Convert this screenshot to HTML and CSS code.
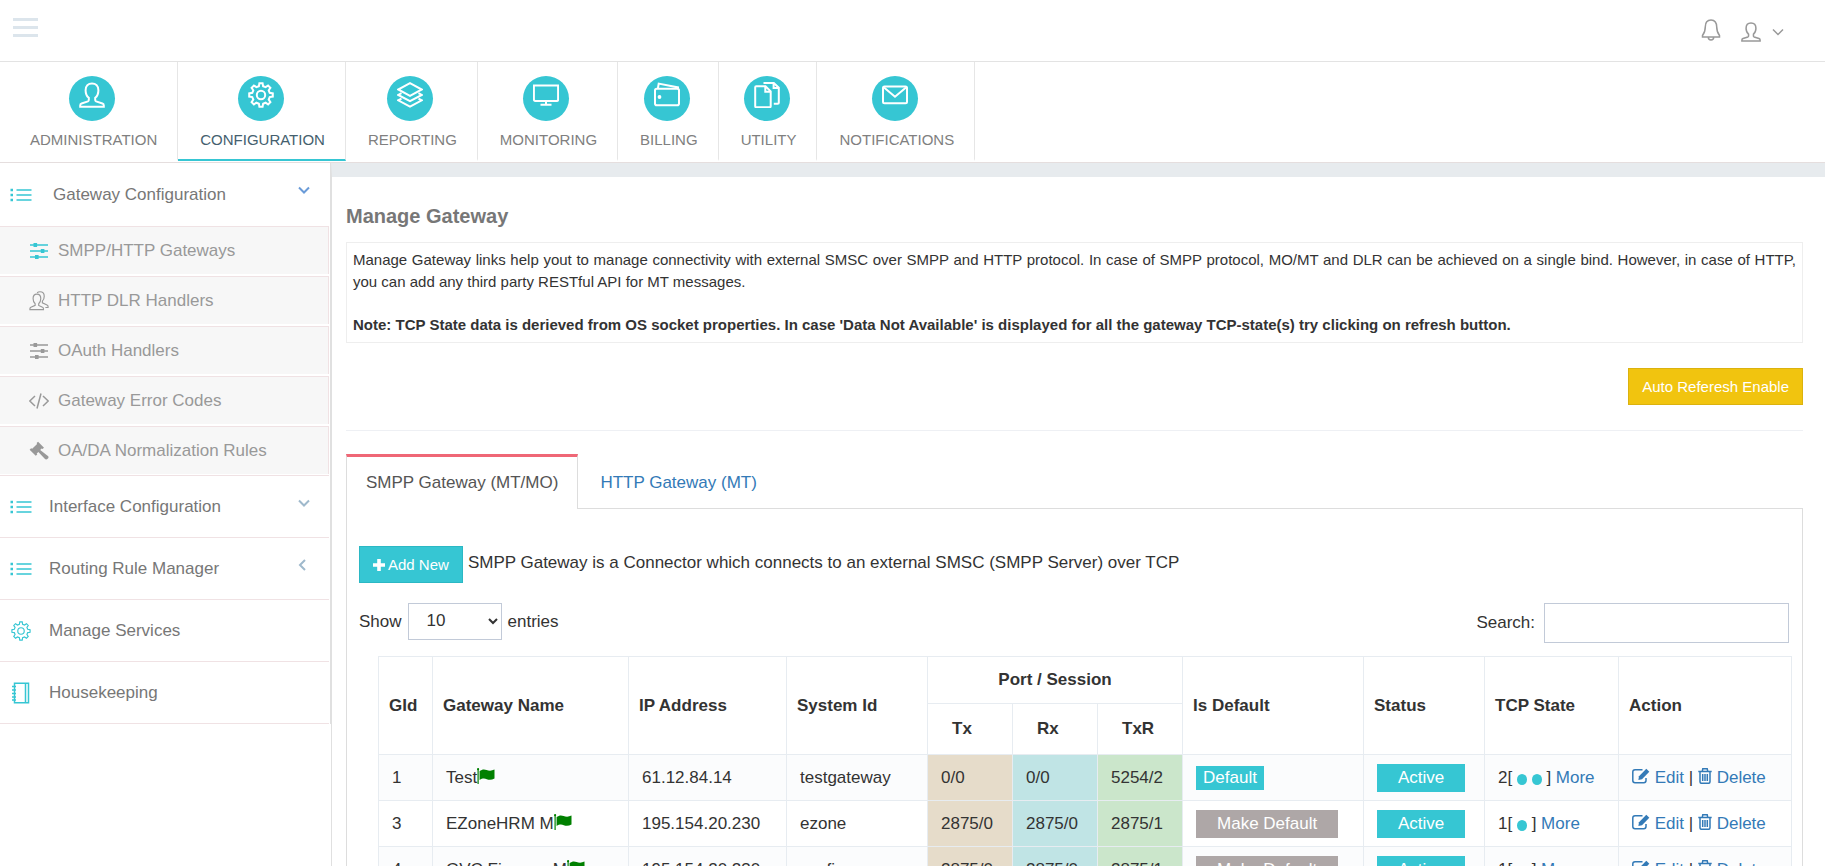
FILE: index.html
```html
<!DOCTYPE html>
<html lang="en">
<head>
<meta charset="utf-8">
<title>Manage Gateway</title>
<link rel="stylesheet" href="styles.css">
</head>
<body>
<svg class="sprite" aria-hidden="true">
  <symbol id="i-user" viewBox="0 0 26 26"><path d="M9.8 15.8C7.6 14.2 6.6 11.6 6.6 8.2 6.6 4 9.2 1.4 13 1.4s6.4 2.6 6.4 6.8c0 3.4-1 6-3.2 7.6v2.3c0 .6.3 1 .9 1.3l6.300 2.100c.9.3 1.400 1 1.400 1.900v1.400H1.200v-1.400c0-.9.5-1.600 1.400-1.900l6.300-2.100c.6-.3.9-.7.9-1.300z"/></symbol>
  <symbol id="i-users" viewBox="0 0 26 26"><path d="M8 16.500C6.200 15 5.300 12.800 5.300 9.800c0-3.600 2-5.800 5-5.800s5 2.200 5 5.800c0 3-.9 5.200-2.700 6.700v2.300l5 2.400c.9.400 1.200.9 1.200 1.800v1.300H1.200V23c0-.9.5-1.500 1.300-1.900l5.500-2.400zM10.500 2.200C11.600 1.400 12.900 1 14.300 1c3.300 0 5.500 2.300 5.500 5.700 0 2.900-.9 5-2.400 6.400v2.300l6 2.700c.9.400 1.400 1 1.400 1.900v1.500h-3.500"/></symbol>
  <symbol id="i-gear" viewBox="0 0 26 26"><circle cx="13" cy="13" r="4.200"/><path d="M10.900 4.200 11.400 1.200h3.200l.5 3 2.500 1 2.500-1.700 2.300 2.300-1.700 2.500 1 2.500 3.100.6v3.200l-3.100.5-1 2.500 1.700 2.500-2.300 2.300-2.500-1.700-2.500 1-.5 3.100h-3.200l-.5-3.100-2.500-1-2.500 1.700-2.300-2.300 1.700-2.500-1-2.500-3.100-.5v-3.200l3.100-.6 1-2.500L3.600 5.800l2.300-2.300 2.500 1.700z"/></symbol>
  <symbol id="i-layers" viewBox="0 0 26 26"><path d="M13 1.200 24.800 7.500 13 13.800 1.200 7.500zM4.500 11.200l-3.300 1.700L13 19.200l11.800-6.300-3.300-1.700M4.500 16.600l-3.300 1.700L13 24.600l11.800-6.300-3.300-1.700"/></symbol>
  <symbol id="i-screen" viewBox="0 0 26 26"><path d="M.9 3.500h24.200v14c0 .9-.5 1.400-1.400 1.400H2.300c-.9 0-1.400-.5-1.400-1.400zM13 19v3.500M7.500 22.700h11"/></symbol>
  <symbol id="i-wallet" viewBox="0 0 26 26"><rect x="1" y="6.800" width="24" height="16.400" rx="1.800"/><path d="M3.900 6.500 4.700 1.600 24 5.400v1.400"/><circle class="solid" cx="5.500" cy="15" r="1.900"/></symbol>
  <symbol id="i-docs" viewBox="0 0 26 26"><path d="M2.200 4.200h9.300l5.200 5.200v14.800c0 .7-.3 1-1 1H2.200c-.7 0-1-.3-1-1v-19c0-.7.300-1 1-1zM11.300 4.500v5.200h5.200M9.500 1h10.300l5 4.800v15c0 .7-.3 1-1 1h-4M19.600 1.200v4.700h5"/></symbol>
  <symbol id="i-mail" viewBox="0 0 26 26"><rect x="1" y="4.500" width="24" height="16.700" rx="1.500"/><path d="m2 5.500 11 9.300 11-9.300"/></symbol>
  <symbol id="i-bell" viewBox="0 0 20 22"><path d="M10 1C6 1 4.300 4 4.300 7.800c0 4.500-.8 6.200-2.800 8.700v1.600h17v-1.600c-2-2.500-2.800-4.200-2.800-8.700C15.700 4 14 1 10 1zM7.300 18.300c0 1.700 1.100 2.700 2.700 2.700s2.700-1 2.700-2.700"/></symbol>
  <symbol id="i-list" viewBox="0 0 22 14"><path d="M6.500 2h15M6.500 7h15M6.500 12h15"/><path class="solid" d="M.5.800H3v2.400H.5zM.5 5.800H3v2.400H.5zM.5 10.800H3v2.400H.5z"/></symbol>
  <symbol id="i-equal" viewBox="0 0 20 20"><path d="M1 4h18M1 10h18M1 16h18"/><path class="solid" d="M4.500 2h3.600v4H4.500zM11.800 8h3.600v4h-3.600zM6 14h3.600v4H6z"/></symbol>
  <symbol id="i-code" viewBox="0 0 20 20"><path d="M6 5 .8 10 6 15M14 5l5.200 5-5.200 5M12 2.500 8 17.500"/></symbol>
  <symbol id="i-gavel" viewBox="0 0 22 22"><path class="solid" d="M10 .8 16.500 7.300 14.800 8.700 13.900 8.200 12.300 10l8.500 6.400c1 .8.900 1.800 0 2.900-1.100 1.200-2.300 1.500-3.200.6L10.300 12 8.500 13.800l.6 1L7.400 16.300.7 9.600 2.300 8l1.200.5L8.900 3.200l-.5-1z"/></symbol>
  <symbol id="i-book" viewBox="0 0 20 22"><path d="M3.500 1.200h14v19.600h-14zM14.500 1.200v19.600M1 4.500h4M1 8h4M1 11.500h4M1 15h4M1 18h4"/></symbol>
  <symbol id="i-down" viewBox="0 0 12 12"><path d="m1 3.500 5 5 5-5"/></symbol>
  <symbol id="i-left" viewBox="0 0 12 12"><path d="M7 1 2 6l5 5"/></symbol>
  <symbol id="i-plus" viewBox="0 0 12 12"><path class="solid" d="M4.200 0h3.600v4.200H12v3.600H7.800V12H4.200V7.800H0V4.200h4.200z"/></symbol>
  <symbol id="i-flag" viewBox="0 0 18 16"><path class="solid" d="M.5 1h1.200v15H.5zM2.600 3C5 1.200 7.300 1 9.600 2c2.300 1 5 1.100 7.900-.4v9c-2.800 1.500-5.400 1.500-7.700.6-2.300-1-4.700-.9-7.200.9z"/><circle class="solid" cx="1.100" cy="1.200" r="1.100"/></symbol>
  <symbol id="i-edit" viewBox="0 0 18 16"><path d="M14 10v2.500c0 1.400-.8 2.200-2.200 2.200H3C1.600 14.700.8 13.900.8 12.500V4c0-1.400.8-2.200 2.200-2.200h7.500"/><path class="solid" d="m14.300.8 3 3L10 11.200l-3.600.7.600-3.700z"/></symbol>
  <symbol id="i-trash" viewBox="0 0 14 16"><path d="M.3 3.400h13.400M4.300 3.200l.5-2.400h4.400l.5 2.400M2 3.600v10.200c0 1 .6 1.500 1.400 1.500h7.200c.8 0 1.400-.5 1.400-1.500V3.600M4.700 6v7M7 6v7M9.300 6v7"/></symbol>
</svg>

<header class="topbar">
  <button class="burger" type="button" aria-label="Toggle menu"><span></span><span></span><span></span></button>
  <div class="topbar-right">
    <button class="plain bell" type="button" aria-label="Alerts"><svg width="20" height="22"><use href="#i-bell"/></svg></button>
    <button class="plain account" type="button" aria-label="Account"><svg width="20" height="20"><use href="#i-user"/></svg><svg class="caret" width="12" height="12"><use href="#i-down"/></svg></button>
  </div>
</header>

<nav class="mainnav">
  <a href="#"><span class="disc"><svg width="26" height="26"><use href="#i-user"/></svg></span><span class="name">ADMINISTRATION</span></a>
  <a href="#" class="current"><span class="disc"><svg width="26" height="26"><use href="#i-gear"/></svg></span><span class="name">CONFIGURATION</span></a>
  <a href="#"><span class="disc"><svg width="26" height="26"><use href="#i-layers"/></svg></span><span class="name">REPORTING</span></a>
  <a href="#"><span class="disc"><svg width="26" height="26"><use href="#i-screen"/></svg></span><span class="name">MONITORING</span></a>
  <a href="#"><span class="disc"><svg width="26" height="26"><use href="#i-wallet"/></svg></span><span class="name">BILLING</span></a>
  <a href="#"><span class="disc"><svg width="26" height="26"><use href="#i-docs"/></svg></span><span class="name">UTILITY</span></a>
  <a href="#"><span class="disc"><svg width="26" height="26"><use href="#i-mail"/></svg></span><span class="name">NOTIFICATIONS</span></a>
</nav>

<div class="shell">
  <aside class="side">
    <a class="group open" href="#"><svg width="22" height="14"><use href="#i-list"/></svg><span>Gateway Configuration</span><svg class="arrow" width="12" height="12"><use href="#i-down"/></svg></a>
    <div class="sub">
      <a class="on" href="#"><svg width="20" height="20"><use href="#i-equal"/></svg>SMPP/HTTP Gateways</a>
      <a href="#"><svg width="20" height="20"><use href="#i-users"/></svg>HTTP DLR Handlers</a>
      <a href="#"><svg width="20" height="20"><use href="#i-equal"/></svg>OAuth Handlers</a>
      <a href="#"><svg width="20" height="20"><use href="#i-code"/></svg>Gateway Error Codes</a>
      <a href="#"><svg width="20" height="20"><use href="#i-gavel"/></svg>OA/DA Normalization Rules</a>
    </div>
    <a class="group" href="#"><svg width="22" height="14"><use href="#i-list"/></svg><span>Interface Configuration</span><svg class="arrow" width="12" height="12"><use href="#i-down"/></svg></a>
    <a class="group" href="#"><svg width="22" height="14"><use href="#i-list"/></svg><span>Routing Rule Manager</span><svg class="arrow" width="12" height="12"><use href="#i-left"/></svg></a>
    <a class="group" href="#"><svg width="22" height="20"><use href="#i-gear"/></svg><span>Manage Services</span></a>
    <a class="group" href="#"><svg width="22" height="22"><use href="#i-book"/></svg><span>Housekeeping</span></a>
  </aside>

  <main class="main">
    <div class="page">
      <h1>Manage Gateway</h1>
      <div class="info">
        <p>Manage Gateway links help yout to manage connectivity with external SMSC over SMPP and HTTP protocol. In case of SMPP protocol, MO/MT and DLR can be achieved on a single bind. However, in case of HTTP, you can add any third party RESTful API for MT messages.</p>
        <p><b>Note: TCP State data is derieved from OS socket properties. In case 'Data Not Available' is displayed for all the gateway TCP-state(s) try clicking on refresh button.</b></p>
      </div>
      <div class="refresh"><button class="btn gold" type="button">Auto Referesh Enable</button></div>
      <hr>
      <div class="tabs">
        <a class="tab active" href="#">SMPP Gateway (MT/MO)</a>
        <a class="tab" href="#">HTTP Gateway (MT)</a>
      </div>
      <section class="panel">
        <div class="intro"><button class="btn teal" type="button"><svg width="12" height="12"><use href="#i-plus"/></svg>Add New</button><span>SMPP Gateway is a Connector which connects to an external SMSC (SMPP Server) over TCP</span></div>
        <div class="controls">
          <label class="length">Show <select><option>10</option><option>25</option><option>50</option></select> entries</label>
          <label class="search">Search: <input type="search"></label>
        </div>
        <div class="tablewrap">
          <table>
            <colgroup><col class="c-id"><col class="c-name"><col class="c-ip"><col class="c-sys"><col class="c-port"><col class="c-port"><col class="c-port"><col class="c-def"><col class="c-stat"><col class="c-tcp"><col class="c-act"></colgroup>
            <thead>
              <tr><th rowspan="2">GId</th><th rowspan="2">Gateway Name</th><th rowspan="2">IP Address</th><th rowspan="2">System Id</th><th colspan="3" class="mid">Port / Session</th><th rowspan="2">Is Default</th><th rowspan="2">Status</th><th rowspan="2">TCP State</th><th rowspan="2">Action</th></tr>
              <tr class="ports"><th>Tx</th><th>Rx</th><th>TxR</th></tr>
            </thead>
            <tbody>
              <tr><td>1</td><td>Test<svg class="flag" width="18" height="16"><use href="#i-flag"/></svg></td><td>61.12.84.14</td><td>testgateway</td><td class="tx">0/0</td><td class="rx">0/0</td><td class="txr">5254/2</td><td><span class="label">Default</span></td><td><button class="pill" type="button">Active</button></td><td>2[ <i class="dot"></i> <i class="dot"></i> ] <a href="#">More</a></td><td><a href="#"><svg width="18" height="16"><use href="#i-edit"/></svg> Edit</a> | <a href="#"><svg width="14" height="16"><use href="#i-trash"/></svg> Delete</a></td></tr>
              <tr><td>3</td><td>EZoneHRM M<svg class="flag" width="18" height="16"><use href="#i-flag"/></svg></td><td>195.154.20.230</td><td>ezone</td><td class="tx">2875/0</td><td class="rx">2875/0</td><td class="txr">2875/1</td><td><button class="pill grey" type="button">Make Default</button></td><td><button class="pill" type="button">Active</button></td><td>1[ <i class="dot"></i> ] <a href="#">More</a></td><td><a href="#"><svg width="18" height="16"><use href="#i-edit"/></svg> Edit</a> | <a href="#"><svg width="14" height="16"><use href="#i-trash"/></svg> Delete</a></td></tr>
              <tr><td>4</td><td>GVC Finance M<svg class="flag" width="18" height="16"><use href="#i-flag"/></svg></td><td>195.154.20.230</td><td>gvcfin</td><td class="tx">2875/0</td><td class="rx">2875/0</td><td class="txr">2875/1</td><td><button class="pill grey" type="button">Make Default</button></td><td><button class="pill" type="button">Active</button></td><td>1[ <i class="dot"></i> ] <a href="#">More</a></td><td><a href="#"><svg width="18" height="16"><use href="#i-edit"/></svg> Edit</a> | <a href="#"><svg width="14" height="16"><use href="#i-trash"/></svg> Delete</a></td></tr>
            </tbody>
          </table>
        </div>
      </section>
    </div>
  </main>
</div>
</body>
</html>
```
FILE: styles.css
```css
* { box-sizing: border-box; }

body {
  margin: 0;
  height: 100vh;
  display: flex;
  flex-direction: column;
  overflow: hidden;
  background: #fff;
  color: #333;
  font: 17px/24px "Liberation Sans", Arial, sans-serif;
}

a { color: #337ab7; text-decoration: none; }
button, input, select { font: inherit; color: inherit; }
p { margin: 0; }

svg { fill: none; stroke: currentColor; stroke-width: 1.5; flex: none; }
.solid { fill: currentColor; stroke: none; }
.sprite { position: absolute; width: 0; height: 0; }

/* Top bar */
.topbar {
  flex: none;
  display: flex;
  justify-content: space-between;
  align-items: flex-start;
  height: 62px;
  padding: 18px 41px 0 13px;
  border-bottom: 1px solid #e3e3e3;
}
.burger {
  display: flex;
  flex-direction: column;
  gap: 5px;
  width: 25px;
  padding: 0;
  border: 0;
  background: none;
}
.burger span { height: 3px; background: #dce5ec; }
.topbar-right { display: flex; gap: 20px; color: #999; }
.plain { display: flex; align-items: center; gap: 11px; padding: 0; border: 0; background: none; }
.account { padding-top: 4px; }
.account svg { stroke-width: 2; }
.account .caret { stroke-width: 1.5; }

/* Module navigation */
.mainnav {
  flex: none;
  display: flex;
  height: 101px;
  padding: 0 0 1px 8px;
  border-bottom: 1px solid #e5dede;
}
.mainnav a {
  display: flex;
  flex-direction: column;
  align-items: center;
  gap: 8px;
  padding: 14px 20px 0 18px;
  border-right: 1px solid #e6e6e6;
  border-bottom: 2px solid transparent;
  color: #808080;
  font-size: 15px;
  line-height: 22px;
}
.mainnav .name { padding-left: 4px; }
.mainnav .current { color: #44606e; border-bottom-color: #36c6d3; }
.disc {
  display: flex;
  justify-content: center;
  width: 46px;
  height: 45px;
  padding-top: 6px;
  border-radius: 50%;
  background: #36c6d3;
  color: #fff;
}
.disc svg { stroke-width: 2; }

/* Sidebar */
.shell { flex: 1; min-height: 0; display: flex; }
.side { flex: none; align-self: flex-start; width: 331px; padding-right: 1px; border-right: 1px solid #e0e0e0; }
.group {
  display: flex;
  align-items: center;
  height: 62px;
  padding: 0 19px 0 10px;
  border-bottom: 1px solid #f0e2e4;
  color: #777;
}
.group > svg:first-child { color: #36c6d3; }
.group span { flex: 1; padding-left: 17px; }
.group.open { height: 64px; }
.group.open span { padding-left: 21px; }
.group .arrow { align-self: flex-start; margin-top: 21px; color: #9fb9cc; stroke-width: 2; }
.group.open .arrow { color: #6a9bd8; }
.sub { border-bottom: 1px solid #f0e2e4; }
.sub a {
  display: flex;
  align-items: center;
  gap: 9px;
  height: 48px;
  margin-bottom: 2px;
  padding-left: 29px;
  border: solid #f0e2e4;
  border-width: 1px 1px 0 0;
  background: #f7f7f7;
  color: #999;
}
.sub a:first-child { border-top: 0; height: 47px; }
.sub a:last-child { margin-bottom: 1px; }
.sub .on svg { color: #36c6d3; }

/* Page */
.main { flex: 1; min-width: 0; border-top: 14px solid #e7ebee; border-left: 1px solid #e0e0e0; }
.page { padding: 26px 22px 0 14px; }
h1 { margin: 0 0 13px; color: #777; font-size: 20px; line-height: 26px; }
.info {
  padding: 6px;
  border: 1px solid #eee;
  font-size: 15px;
  line-height: 22px;
  text-align: justify;
}
.info p + p { padding-top: 21px; }
.refresh { display: flex; justify-content: flex-end; padding: 25px 0; }
.btn { padding: 7px 13px; border: 1px solid; color: #fff; font-size: 15px; line-height: 21px; }
.gold { background: #f1c40f; border-color: #dbb20e; }
.teal { display: flex; align-items: center; gap: 3px; background: #36c6d3; border-color: #2bb8c4; }
hr { margin: 0 0 23px; border: 0; border-top: 1px solid #eef0f4; }

.tabs { display: flex; gap: 2px; border-bottom: 1px solid #ddd; }
.tab { padding: 16px 20px 13px; border-top: 1px solid transparent; }
.tab.active {
  margin-bottom: -1px;
  padding: 14px 19px;
  border: 1px solid #ddd;
  border-width: 3px 1px 0;
  border-top-color: #ef6776;
  background: #fff;
  color: #555;
}
.panel { border: 1px solid #ddd; border-top: 0; padding: 37px 11px 0 12px; }
.intro { display: flex; align-items: flex-start; gap: 5px; }
.intro span { padding-top: 5px; }
.controls { display: flex; justify-content: space-between; padding: 20px 2px 13px 0; }
.length, .search { display: flex; align-items: flex-start; gap: 6px; line-height: 37px; }
.search { gap: 9px; line-height: 39px; }
select { width: 94px; height: 37px; padding: 0 7px 2px 14px; border: 1px solid #c2cad8; background: #fff; }
input { width: 245px; height: 40px; border: 1px solid #c2cad8; background: #fff; }

/* Gateway table */
.tablewrap { padding-left: 19px; }
table { width: 100%; table-layout: fixed; border-collapse: collapse; }
th, td { border: 1px solid #e7ecf1; text-align: left; white-space: nowrap; }
th { padding: 10px; height: 47px; }
.mid { text-align: center; }
.ports th { height: 51px; text-align: left; padding: 10px 24px; }
td { height: 46px; padding: 0 0 0 13px; line-height: 24px; }
tbody tr:nth-child(odd) { background: #fbfcfd; }
.tx { background: #e6dcca; }
.rx { background: #c0e4e5; }
.txr { background: #cbe6cb; }
.c-id { width: 54px; }
.c-name { width: 196px; }
.c-ip { width: 158px; }
.c-sys { width: 141px; }
.c-port { width: 85px; }
.c-def { width: 181px; }
.c-stat { width: 121px; }
.c-tcp { width: 134px; }
.c-act { width: 173px; }
.flag { color: #008000; vertical-align: -1px; }
.label { padding: 2px 7px 3px; background: #36c6d3; color: #fff; }
.pill { padding: 2px 21px; border: 0; background: #36c6d3; color: #fff; vertical-align: middle; }
.grey { background: #aea7a7; }
.dot { display: inline-block; width: 10px; height: 11px; border-radius: 50%; background: #36c6d3; vertical-align: -2px; }
td a svg { vertical-align: -1px; }
```
